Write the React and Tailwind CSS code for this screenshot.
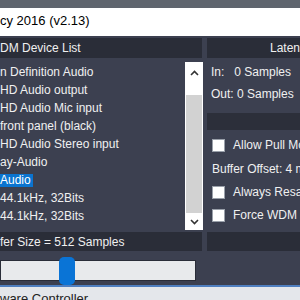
import React from 'react';

// 左側のデバイス一覧（左端が切れている状態をそのまま再現）
const DEVICES = [
    'n Definition Audio',
    'HD Audio output',
    'HD Audio Mic input',
    'front panel (black)',
    'HD Audio Stereo input',
    'ay-Audio',
    'Audio',
    '44.1kHz, 32Bits',
    '44.1kHz, 32Bits',
];

function Check({ label, h }) {
    return (
        <div className={`flex items-center gap-[8px] pl-[5px] ${h}`}>
            <span className="h-[13px] w-[13px] shrink-0 border border-[#9aa0aa] bg-white" />
            <span className="whitespace-nowrap">{label}</span>
        </div>
    );
}

export default function App() {
    return (
        <div
            className="relative h-[300px] w-[300px] overflow-hidden bg-[#3c4050] text-[12px] text-[#f0f0f0]"
            style={{ fontFamily: '"Liberation Sans", Arial, sans-serif' }}
        >
            <div className="h-[8px] bg-[#5f656e]" />
            <div className="flex h-[28px] items-center bg-white pb-[2px] text-[13px] text-black">
                <span className="whitespace-nowrap">cy 2016 (v2.13)</span>
            </div>

            <div className="flex h-[249px] pt-[2px]">
                {/* 左カラム */}
                <div className="flex w-[203px] shrink-0 flex-col">
                    <div className="flex h-[20px] w-[202px] items-center bg-[#2a2d38]">
                        <span className="whitespace-nowrap">DM Device List</span>
                    </div>
                    <div className="flex h-[174px]">
                        <div className="flex w-[185px] flex-col pt-[5px]">
                            {DEVICES.map((d, i) => (
                                <div key={i} className="flex h-[18px] items-center">
                                    <span
                                        className={
                                            i === 6
                                                ? 'whitespace-nowrap bg-[#0a74d0] pr-[2px] leading-[13px] text-white'
                                                : 'whitespace-nowrap'
                                        }
                                    >
                                        {d}
                                    </span>
                                </div>
                            ))}
                        </div>
                        <div className="mt-[4px] flex h-[168px] w-[18px] flex-col bg-white">
                            <div className="flex h-[33px] items-start justify-center pt-[8px]">
                                <svg width="9" height="6" viewBox="0 0 9 6">
                                    <path d="M1 5 L4.5 1.5 L8 5" fill="none" stroke="#333" strokeWidth="1.6" />
                                </svg>
                            </div>
                            <div className="mx-[1px] h-[118px] bg-[#d2d2d2]" />
                            <div className="flex flex-1 items-center justify-center">
                                <svg width="9" height="6" viewBox="0 0 9 6">
                                    <path d="M1 1 L4.5 4.5 L8 1" fill="none" stroke="#333" strokeWidth="1.6" />
                                </svg>
                            </div>
                        </div>
                    </div>
                    <div className="flex h-[19px] w-[202px] items-center bg-[#2a2d38]">
                        <span className="whitespace-nowrap">fer Size = 512 Samples</span>
                    </div>
                    <div className="relative mt-[9px] h-[21px] w-[196px] border border-[#2a2d38] bg-[#e8eaec]">
                        <div className="absolute left-[58px] top-[-4px] h-[28px] w-[16px] rounded-[5px] bg-[#0a74d6]" />
                    </div>
                </div>

                {/* 右カラム */}
                <div className="ml-[4px] flex flex-1 flex-col">
                    <div className="flex h-[20px] items-center bg-[#2a2d38] pl-[63px]">
                        <span className="whitespace-nowrap">Latency</span>
                    </div>
                    <div className="flex flex-col pl-[4px] pt-[4px]">
                        <div className="flex h-[20px] items-center whitespace-nowrap">In:&nbsp;&nbsp;&nbsp;0 Samples</div>
                        <div className="flex h-[24px] items-center whitespace-nowrap">Out: 0 Samples</div>
                    </div>
                    <div className="mt-[7px] h-[17px] bg-[#2c2f3a]" />
                    <div className="flex flex-col pt-[3px]">
                        <Check label="Allow Pull Mode" h="h-[24px]" />
                        <div className="flex h-[23px] items-center whitespace-nowrap pl-[5px]">Buffer Offset: 4 ms</div>
                        <Check label="Always Resample" h="h-[24px]" />
                        <Check label="Force WDM" h="h-[22px]" />
                    </div>
                    <div className="mt-[6px] h-[19px] bg-[#2a2d38]" />
                </div>
            </div>

            {/* 下端の別ウィンドウ */}
            <div className="h-[15px] border-t-2 border-[#4f7fc0] bg-[#e4e7eb] text-[13px] leading-[13px] text-[#222]">
                <span className="relative top-[5px] whitespace-nowrap">ware Controller</span>
            </div>
        </div>
    );
}
